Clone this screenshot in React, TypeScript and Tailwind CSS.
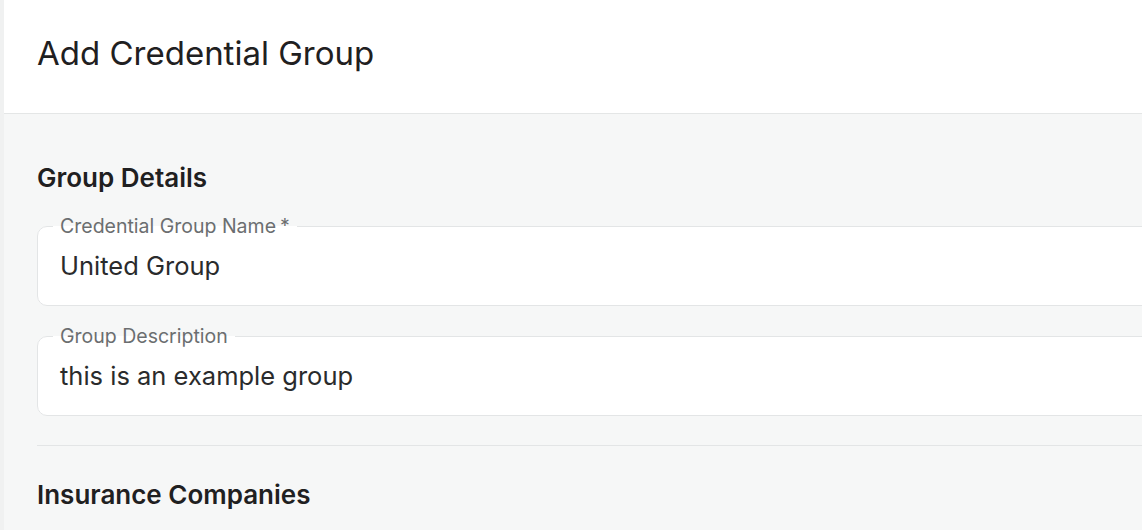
import React from 'react';

function OutlinedField({ label, value, required }: { label: string; value: string; required?: boolean }) {
  return (
    <fieldset className="h-[92px] w-[1200px] rounded-[10px] border border-[#e3e5e6] bg-white pl-[15px] pr-3">
      <legend className="px-[7px] text-[19.5px] leading-[24px] text-[#6b6e70]">
        {label}
        {required && <span className="ml-[4px]">*</span>}
      </legend>
      <div className="px-[7px] pt-[12px] text-[25.5px] leading-[32px] text-[#2a2b2c]">{value}</div>
    </fieldset>
  );
}

export default function App() {
  return (
    <div
      className="flex h-[530px] w-[1142px] overflow-hidden bg-[#f3f4f4]"
      style={{ fontFamily: 'Inter, "Noto Sans", sans-serif' }}
    >
      <div className="w-[4px] shrink-0 bg-[#f0f1f1]" />
      <div className="flex min-w-0 flex-1 flex-col bg-[#f6f7f7]">
        <div className="h-[114px] shrink-0 border-b border-[#e4e6e6] bg-white pl-[33px] pt-[33px]">
          <h1 className="text-[33px] font-normal leading-[40px] text-[#1f2021]">Add Credential Group</h1>
        </div>
        <div className="pl-[33px]">
          <h2 className="pt-[48px] text-[26px] font-semibold leading-[32px] text-[#1f2021]">Group Details</h2>
          <div className="mt-[20px] flex flex-col gap-[18px]">
            <OutlinedField label="Credential Group Name" value="United Group" required />
            <OutlinedField label="Group Description" value="this is an example group" />
          </div>
          <div className="mt-[29px] w-[1200px] border-t border-[#e3e5e6]" />
          <h2 className="pt-[33px] text-[26px] font-semibold leading-[32px] text-[#1f2021]">Insurance Companies</h2>
        </div>
      </div>
    </div>
  );
}
